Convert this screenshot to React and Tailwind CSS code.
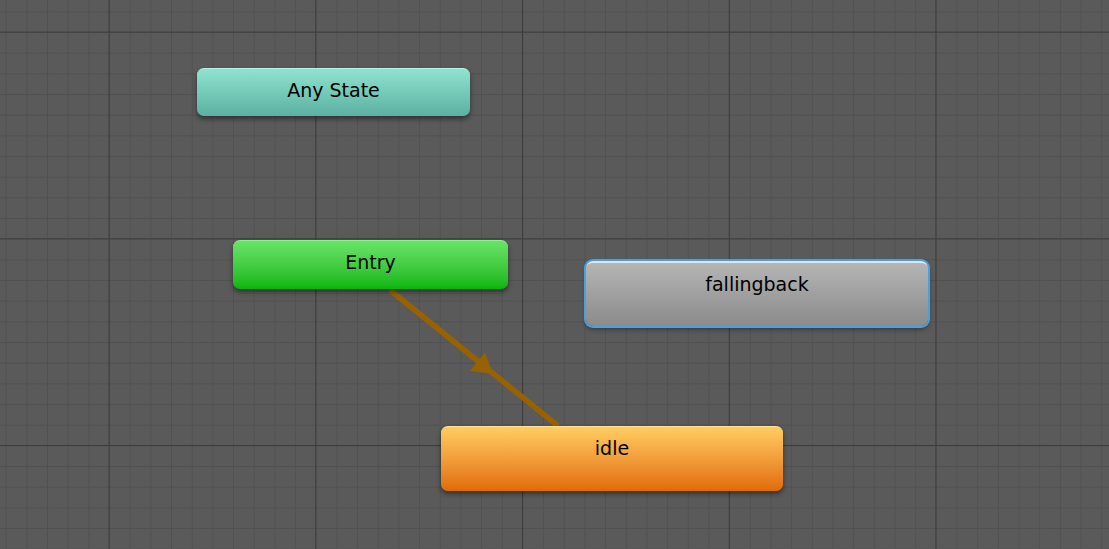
import React from "react";

// graph nodes, placed on the free canvas
const nodes = [
  {
    label: "Any State",
    box: "left-[197px] top-[68px] w-[273px] h-[48px]",
    skin: "bg-gradient-to-b from-[#8fe3ce] to-[#5bb1a2] border-t border-[#b6f3e3]",
  },
  {
    label: "Entry",
    box: "left-[233px] top-[240px] w-[275px] h-[49px]",
    skin: "bg-gradient-to-b from-[#68e468] to-[#05b605] border-t border-[#8ff08f]",
  },
  {
    label: "fallingback",
    box: "left-[586px] top-[261px] w-[342px] h-[65px]",
    skin: "bg-gradient-to-b from-[#b5b5b5] to-[#8b8b8b] border-t-2 border-[#e6e6e6] ring-2 ring-[#4b9fe6] shadow-[0_0_7px_3px_rgba(70,150,230,0.55)]",
  },
  {
    label: "idle",
    box: "left-[441px] top-[426px] w-[342px] h-[65px]",
    skin: "bg-gradient-to-b from-[#ffcd60] to-[#e06c00] border-t border-[#ffe29a]",
  },
];

function Grid() {
  return (
    <svg className="absolute inset-0" width="1109" height="549">
      <defs>
        <pattern id="minor" x="5.7" y="11.3" width="20.67" height="20.67" patternUnits="userSpaceOnUse">
          <path d="M 0 0.5 H 20.67 M 0.5 0 V 20.67" stroke="#515151" strokeWidth="1" fill="none" />
        </pattern>
        <pattern id="major" x="108.6" y="31.6" width="206.7" height="206.7" patternUnits="userSpaceOnUse">
          <path d="M 0 0.5 H 206.7 M 0.5 0 V 206.7" stroke="#3c3c3c" strokeWidth="1" fill="none" />
        </pattern>
      </defs>
      <rect width="1109" height="549" fill="#5a5a5a" />
      <rect width="1109" height="549" fill="url(#minor)" />
      <rect width="1109" height="549" fill="url(#major)" />
    </svg>
  );
}

function Transition() {
  return (
    <svg className="absolute inset-0" width="1109" height="549">
      <line x1="390" y1="290" x2="558" y2="426" stroke="#986200" strokeWidth="5.5" />
      <polygon points="470,371 485,352.5 493,374" fill="#986200" />
    </svg>
  );
}

export default function App() {
  return (
    <div className="relative w-[1109px] h-[549px] overflow-hidden bg-[#5a5a5a] font-['DejaVu_Sans',sans-serif]">
      <Grid />
      <Transition />
      {nodes.map((n) => (
        <div
          key={n.label}
          className={`absolute ${n.box} ${n.skin} rounded-[7px] shadow-[0_3px_5px_rgba(0,0,0,0.45)] text-center text-[19px] leading-[22px] pt-[10px] text-black`}
        >
          {n.label}
        </div>
      ))}
    </div>
  );
}
